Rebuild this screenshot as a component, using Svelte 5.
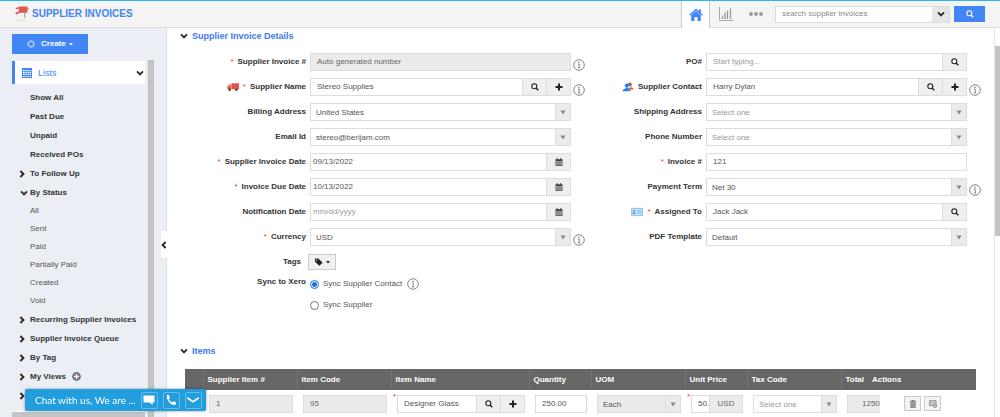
<script>
  const mainLists = ['Show All', 'Past Due', 'Unpaid', 'Received POs'];
  const statuses = ['All', 'Sent', 'Paid', 'Partially Paid', 'Created', 'Void'];
  const groups = ['Recurring Supplier Invoices', 'Supplier Invoice Queue', 'By Tag', 'My Views', ''];

  const leftFields = [
    { id: 'number', label: 'Supplier Invoice #', req: true, kind: 'readonly', value: 'Auto generated number', info: true },
    { id: 'supplier', label: 'Supplier Name', req: true, kind: 'lookup-add', value: 'Stereo Supplies', info: true, icon: 'truck' },
    { id: 'billing', label: 'Billing Address', kind: 'select', value: 'United States' },
    { id: 'email', label: 'Email Id', kind: 'select', value: 'stereo@berijam.com' },
    { id: 'date', label: 'Supplier Invoice Date', req: true, kind: 'date', value: '09/13/2022' },
    { id: 'due', label: 'Invoice Due Date', req: true, kind: 'date', value: '10/13/2022' },
    { id: 'notify', label: 'Notification Date', kind: 'date', value: '', placeholder: 'mm/dd/yyyy' },
    { id: 'currency', label: 'Currency', req: true, kind: 'select', value: 'USD', info: true }
  ];
  const rightFields = [
    { id: 'po', label: 'PO#', kind: 'lookup', value: '', placeholder: 'Start typing...' },
    { id: 'contact', label: 'Supplier Contact', kind: 'lookup-add', value: 'Harry Dylan', info: true, icon: 'people' },
    { id: 'shipping', label: 'Shipping Address', kind: 'select', value: 'Select one', empty: true },
    { id: 'phone', label: 'Phone Number', kind: 'select', value: 'Select one', empty: true },
    { id: 'invoice', label: 'Invoice #', req: true, kind: 'text', value: '121' },
    { id: 'term', label: 'Payment Term', kind: 'select', value: 'Net 30', info: true },
    { id: 'assigned', label: 'Assigned To', req: true, kind: 'lookup', value: 'Jack Jack', icon: 'card' },
    { id: 'template', label: 'PDF Template', kind: 'select', value: 'Default' }
  ];
  let sync = $state('contact');
</script>

{#snippet chevron(dir)}
  <svg class="chev {dir}" viewBox="0 0 8 8" aria-hidden="true"><path d="M1 2.4 4 5.4 7 2.4" fill="none" stroke="#2b2b2b" stroke-width="1.9" /></svg>
{/snippet}

{#snippet magnifier()}
  <svg class="glyph" viewBox="0 0 8 8" aria-hidden="true"><circle cx="3.3" cy="3.3" r="2.5" fill="none" stroke="currentColor" stroke-width="1.1" /><path d="M5 5 7.3 7.3" stroke="currentColor" stroke-width="1.4" /></svg>
{/snippet}

{#snippet plus()}
  <svg class="glyph" viewBox="0 0 8 8" aria-hidden="true"><path d="M4 .5V7.5M.5 4H7.5" stroke="currentColor" stroke-width="2" /></svg>
{/snippet}

{#snippet calendar()}
  <svg class="glyph" viewBox="0 0 8 8" aria-hidden="true"><path d="M.5 1.2H7.5V7.8H.5Z" fill="#444" /><path d="M1.3 3.1H2.6V7H1.3ZM3.4 3.1H4.6V7H3.4ZM5.4 3.1H6.7V7H5.4Z" fill="#c9c9c9" /><path d="M1.2 5.1H6.8" stroke="#666" stroke-width=".5" /><path d="M2.2 0v2M5.8 0v2" stroke="#444" /></svg>
{/snippet}

{#snippet info()}
  <button class="info" type="button" aria-label="Information">
    <svg viewBox="0 0 12 12" aria-hidden="true"><circle cx="6" cy="6" r="5.3" fill="none" stroke="#666" stroke-width=".8" /><path d="M5 5H6.2V8.8M5 8.9H7.2" fill="none" stroke="#666" stroke-width=".8" /><circle cx="6" cy="3.2" r=".7" fill="#666" /></svg>
  </button>
{/snippet}

{#snippet picker(id, value, name, empty = false)}
  <div class="picker" class:empty>
    <select {id} aria-label={name}><option>{value}</option></select>
    <span class="arrow"><svg viewBox="0 0 6 5" aria-hidden="true"><path d="M.5.5H5.5L3 4.5Z" fill="#888" /></svg></span>
  </div>
{/snippet}

{#snippet row(f)}
  <div class="row">
    <label for={f.id}>
      {#if f.icon === 'truck'}
        <svg class="deco" viewBox="0 0 12 9" aria-hidden="true"><path d="M4.6.8H12V6.8H4.6ZM.3 4.3 2 2H4.3V6.8H.3Z" fill="#e2574c" /><path d="M1.3 4 2.4 2.8H3.4V4Z" fill="#f6b0a9" /><circle cx="2.6" cy="7.2" r="1.3" fill="#4b4345" /><circle cx="9.4" cy="7.2" r="1.3" fill="#4b4345" /></svg>
      {:else if f.icon === 'people'}
        <svg class="deco" viewBox="0 0 12 11" aria-hidden="true"><circle cx="8" cy="2.7" r="2.1" fill="#5f6876" /><path d="M6 8.6C6.2 5 11.8 4.6 12 8.3Z" fill="#f0532d" /><path d="M7.2 1.5 9.2 4.8" stroke="#f0532d" stroke-width="1.4" /><circle cx="4.7" cy="3.9" r="2.3" fill="#2687e9" /><path d="M0 10.2C.3 6.7 3.3 8 4 6H5.8C6.3 8 8.8 7.3 8.6 10.2Z" fill="#2687e9" /></svg>
      {:else if f.icon === 'card'}
        <svg class="deco" viewBox="0 0 12 8" aria-hidden="true"><path d="M.4.4H11.6V7.6H.4Z" fill="#bfe2fb" stroke="#70bdf1" stroke-width=".8" /><circle cx="3" cy="3" r="1.1" fill="#a97763" /><path d="M1.4 6C1.5 4 4.5 4 4.6 6Z" fill="#5a8fbb" /><path d="M6 3H10.5M6 5H10.5" stroke="#69b7ec" stroke-width=".8" /></svg>
      {/if}
      {#if f.req}<span class="req">*</span>{/if}
      <span>{f.label}</span>
    </label>
    {#if f.kind === 'select'}
      {@render picker(f.id, f.value, f.label, f.empty)}
    {:else}
      <div class="box" class:readonly={f.kind === 'readonly'} class:date={f.kind === 'date'}>
        <input id={f.id} type="text" value={f.value} placeholder={f.placeholder} readonly={f.kind === 'readonly'} />
        {#if f.kind === 'lookup' || f.kind === 'lookup-add'}
          <button type="button" aria-label="Search">{@render magnifier()}</button>
        {/if}
        {#if f.kind === 'lookup-add'}
          <button type="button" aria-label="Add">{@render plus()}</button>
        {/if}
        {#if f.kind === 'date'}
          <button type="button" aria-label="Choose date">{@render calendar()}</button>
        {/if}
      </div>
    {/if}
    {#if f.info}{@render info()}{/if}
  </div>
{/snippet}

<div class="app">
  <header>
    <svg class="logo" viewBox="0 0 14 16" aria-hidden="true"><path d="M4 1.2Q4 .4 5.2 .4H11.4Q12.4 .4 12.4 1.2V6.8H4Z" fill="#e2574c" /><path d="M.5 2.2 4 .8V2.4L1.8 3.3ZM0 7.2 4 5V7.3L1.5 8.6Z" fill="#e2574c" /><path d="M9.8 6.8V11.6" stroke="#8d8d8d" /><path d="M12.2 3H13.6" stroke="#c54b42" /><path d="M1.5 14.2H11" stroke="#f3d9c0" stroke-width="1.2" /></svg>
    <h1>SUPPLIER INVOICES</h1>
    <nav>
      <a class="home" href="#home" aria-label="Home">
        <svg viewBox="0 0 14 14" aria-hidden="true"><path d="M2.2 7.2 7 3 11.8 7.2V13H8.6V9H5.4V13H2.2Z" fill="#4285f4" /><path d="M.6 7.3 7 1.5 13.4 7.3" fill="none" stroke="#4285f4" stroke-width="1.5" /><path d="M10 1.2H11.8V5H10Z" fill="#4285f4" /></svg>
      </a>
      <a class="chart" href="#reports" aria-label="Reports">
        <svg viewBox="0 0 14 14" aria-hidden="true"><path d="M.5 0V13.5H14" fill="none" stroke="#aaa" /><path d="M3.5 8.5V12M6 5.5V12M8.5 3.5V12M11.5 1.5V12" stroke="#999" stroke-width="1.3" /></svg>
      </a>
      <button class="more" type="button" aria-label="More">
        <svg viewBox="0 0 14 4" aria-hidden="true"><circle cx="2" cy="2" r="1.9" fill="#999" /><circle cx="7" cy="2" r="1.9" fill="#999" /><circle cx="12" cy="2" r="1.9" fill="#999" /></svg>
      </button>
      <div class="search">
        <input type="text" aria-label="Search supplier invoices" placeholder="search supplier invoices" />
        <button type="button" aria-label="Search options">{@render chevron('down')}</button>
      </div>
      <button class="go" type="button" aria-label="Search">{@render magnifier()}</button>
    </nav>
  </header>

  <div class="body">
    <aside>
      <button class="create" type="button">
        <svg class="glyph" viewBox="0 0 8 8" aria-hidden="true"><circle cx="4" cy="4" r="2.8" fill="none" stroke="#a9c7fa" stroke-width="1.4" /><path d="M4 0V2M4 6V8M0 4H2M6 4H8" stroke="#a9c7fa" /></svg>
        <span>Create</span>
        <svg class="caret" viewBox="0 0 4 3" aria-hidden="true"><path d="M0 0H4L2 2.5Z" fill="#fff" /></svg>
      </button>
      <div class="side">
        <div class="lists">
          <button class="lists-head" type="button">
            <svg viewBox="0 0 10 10" aria-hidden="true"><path d="M0 0H10V10H0Z" fill="#4285f4" /><path d="M.9 2.6H9.1M.9 4.6H9.1M.9 6.5H9.1M.9 8.5H9.1" stroke="#fff" stroke-width="1.1" /><path d="M3 2V9.5M5.2 2V9.5M7.3 2V9.5" stroke="#4285f4" stroke-width=".7" /></svg>
            <span>Lists</span>
            {@render chevron('down')}
          </button>
          <ul>
            {#each mainLists as item}<li><a href="#list">{item}</a></li>{/each}
            <li>{@render chevron('right')}<a href="#list">To Follow Up</a></li>
            <li class="open">{@render chevron('down')}<a href="#list">By Status</a></li>
            {#each statuses as item}<li class="sub"><a href="#list">{item}</a></li>{/each}
            {#each groups as item}
              <li>
                {@render chevron('right')}
                {#if item}<a href="#list">{item}</a>{/if}
                {#if item === 'My Views'}
                  <button class="add" type="button" aria-label="Add view"><svg viewBox="0 0 9 9" aria-hidden="true"><circle cx="4.5" cy="4.5" r="4.4" fill="#777" /><path d="M4.5 2V7M2 4.5H7" stroke="#fff" stroke-width="1.3" /></svg></button>
                {/if}
              </li>
            {/each}
          </ul>
          <div class="panel"></div>
        </div>
        <div class="side-scroll"></div>
      </div>
      <button class="collapse" type="button" aria-label="Collapse sidebar">{@render chevron('left')}</button>
    </aside>

    <main>
      <h2>{@render chevron('down')}<span>Supplier Invoice Details</span></h2>
      <form>
        <div class="col">
          {#each leftFields as f}{@render row(f)}{/each}
          <div class="row tags">
            <span class="label">Tags</span>
            <button class="tag" type="button" aria-label="Add tag">
              <svg class="glyph" viewBox="0 0 8 8" aria-hidden="true"><path d="M0 .6H3.4L7.6 4.7 4.4 7.8 0 3.7Z" fill="#222" /><circle cx="1.5" cy="2" r=".7" fill="#eee" /></svg>
              <svg class="caret" viewBox="0 0 4 3" aria-hidden="true"><path d="M0 0H4L2 2.5Z" fill="#222" /></svg>
            </button>
          </div>
          <div class="row sync">
            <span class="label">Sync to Xero</span>
            <div class="choices">
              <div class="choice">
                <label><input type="radio" value="contact" bind:group={sync} /><span>Sync Supplier Contact</span></label>
                {@render info()}
              </div>
              <div class="choice">
                <label><input type="radio" value="supplier" bind:group={sync} /><span>Sync Supplier</span></label>
              </div>
            </div>
          </div>
        </div>
        <div class="col">
          {#each rightFields as f}{@render row(f)}{/each}
        </div>
      </form>

      <h2>{@render chevron('down')}<span>Items</span></h2>
      <table>
        <colgroup>
          <col class="w-mark" /><col class="w-std" /><col class="w-std" /><col class="w-name" /><col class="w-small" />
          <col class="w-std" /><col class="w-small" /><col class="w-std" /><col class="w-total" /><col class="w-actions" />
        </colgroup>
        <thead>
          <tr>
            <th></th><th>Supplier Item #</th><th>Item Code</th><th>Item Name</th><th>Quantity</th>
            <th>UOM</th><th>Unit Price</th><th>Tax Code</th><th>Total</th><th class="last">Actions</th>
          </tr>
        </thead>
        <tbody>
          <tr>
            <td></td>
            <td><div class="box readonly"><input aria-label="Supplier Item #" value="1" readonly /></div></td>
            <td><div class="box readonly"><input aria-label="Item Code" value="95" readonly /></div></td>
            <td class="needed">
              <div class="box">
                <input aria-label="Item Name" value="Designer Glass" />
                <button type="button" aria-label="Search item">{@render magnifier()}</button>
                <button type="button" aria-label="Add item">{@render plus()}</button>
              </div>
            </td>
            <td><div class="box"><input aria-label="Quantity" value="250.00" /></div></td>
            <td class="grey">{@render picker('uom', 'Each', 'UOM')}</td>
            <td class="needed price"><div class="box"><input aria-label="Unit Price" value="50.00" /><span class="unit">USD</span></div></td>
            <td>{@render picker('tax', 'Select one', 'Tax Code', true)}</td>
            <td class="total"><div class="box readonly"><input aria-label="Total" value="12500.00" readonly /></div></td>
            <td class="actions">
              <div>
                <button type="button" aria-label="Delete row"><svg class="glyph" viewBox="0 0 8 8" aria-hidden="true"><path d="M.8 1.3H7.2M2.8.5H5.2" stroke="#777" /><path d="M1.3 2.2H6.7V8H1.3Z" fill="#888" /><path d="M3 3V7M5 3V7" stroke="#bbb" stroke-width=".6" /></svg></button>
                <button type="button" aria-label="Insert row"><svg class="glyph" viewBox="0 0 8 8" aria-hidden="true"><path d="M.4.6H7V5.6H.4Z" fill="none" stroke="#888" stroke-width=".9" /><path d="M.5 2.3H7M.5 4H7" stroke="#888" stroke-width=".8" /><circle cx="6" cy="6" r="2" fill="#888" /><path d="M6 4.9V7.1M4.9 6H7.1" stroke="#eee" stroke-width=".7" /></svg></button>
              </div>
            </td>
          </tr>
        </tbody>
      </table>
    </main>
    <div class="page-scroll"><div></div></div>
  </div>

  <section class="chat" aria-label="Chat">
    <span>Chat with us, We are ...</span>
    <button type="button" aria-label="Message"><svg viewBox="0 0 12 12" aria-hidden="true"><path d="M.5 1.5H11.5V8.5H9.6V11L6.6 8.5H.5Z" fill="#fff" /></svg></button>
    <button type="button" aria-label="Call"><svg viewBox="0 0 12 12" aria-hidden="true"><path d="M2.2.8 4 .9 5 3.8 3.8 5C4.4 6.6 5.4 7.7 7 8.4L8.3 7.2 11.1 8.4 11 10.2C7 13 .2 5.5 2.2.8Z" fill="#fff" /></svg></button>
    <button type="button" aria-label="Minimize"><svg viewBox="0 0 12 12" aria-hidden="true"><path d="M.3 3.8 6 7.8 11.7 3.8" fill="none" stroke="#fff" stroke-width="1.7" /></svg></button>
  </section>
</div>

<style>
  :global(body) { overflow: hidden; }
  .app { height: 100vh; display: flex; flex-direction: column; overflow: hidden; background: #fff; color: #333; font: 8px/12px "Liberation Sans", Arial, sans-serif; }
  .app * { box-sizing: border-box; }
  svg { display: block; flex: none; }
  button, input, select { font: inherit; color: inherit; margin: 0; padding: 0; border: 0; background: none; border-radius: 0; min-width: 0; outline: none; }
  button { cursor: pointer; display: flex; align-items: center; justify-content: center; flex: none; }
  a { color: inherit; text-decoration: none; }
  ::placeholder { color: #999; opacity: 1; }
  .glyph { width: 8px; height: 8px; }
  .caret { width: 4px; height: 3px; }
  .chev { width: 8px; height: 8px; }
  .right { transform: rotate(-90deg); }
  .left { transform: rotate(90deg); }

  header { flex: none; height: 28px; display: flex; align-items: center; border-top: 1px solid #2cb5f2; border-bottom: 1px solid #ddd; background: #f4f4f4; padding: 0 15px; }
  .logo { width: 14px; height: 16px; margin-right: 3px; }
  h1 { margin: 0; flex: 1; font-size: 10px; color: #4285f4; white-space: nowrap; }
  nav { display: flex; align-items: center; align-self: stretch; }
  .home { width: 29px; align-self: stretch; margin-bottom: -1px; background: #fff; border: solid #ccc; border-width: 0 1px; display: flex; align-items: center; justify-content: center; }
  .home svg, .chart svg { width: 14px; height: 14px; }
  .chart { margin-left: 9px; }
  .more { margin: 0 12px 0 16px; }
  .more svg { width: 14px; height: 4px; }
  .search { display: flex; width: 175px; height: 17px; border: 1px solid #ddd; background: #fff; }
  .search input { flex: 1; padding: 0 6px; color: #666; }
  .search ::placeholder { color: #888; }
  .search button { width: 17px; background: #e6e6e6; }
  .go { margin-left: 4px; width: 31px; height: 16px; background: #4285f4; color: #fff; }

  .body { flex: 1; min-height: 0; display: flex; }
  aside { position: relative; flex: none; width: 167px; border-right: 1px solid #dcdfe4; background: #ebeff5; padding: 6px 12px 0; display: flex; flex-direction: column; align-items: flex-start; }
  .create { width: 76px; height: 20px; gap: 6px; background: #4285f4; color: #fff; font-weight: bold; }
  .create .caret { margin-left: -3px; }
  .side { flex: 1; min-height: 0; width: 142px; margin-top: 6px; display: flex; gap: 3px; }
  .lists { flex: 1; padding-top: 1px; overflow: hidden; }
  .side-scroll { width: 6px; background: #c6c6c6; border: 1px solid #bbb; border-bottom: 0; }
  .lists-head { width: 100%; height: 23px; background: #fff; border-left: 3px solid #4285f4; padding: 0 1px 0 7px; color: #4285f4; font-size: 9px; }
  .lists-head svg:first-child { width: 10px; height: 10px; }
  .lists-head span { flex: 1; text-align: left; padding-left: 6px; }
  ul { list-style: none; margin: 4px 0 0; padding: 0; }
  li { display: flex; align-items: center; height: 19px; padding-left: 18px; font-weight: bold; white-space: nowrap; }
  li:has(> .chev) { padding-left: 6px; }
  li > .chev { margin-right: 4px; }
  li.open { padding-left: 8px; }
  .open > .chev { margin-right: 2px; }
  .sub { height: 18px; font-weight: normal; color: #555; }
  .add { margin-left: 6px; }
  .add svg { width: 9px; height: 9px; }
  .panel { margin-top: 6px; height: 20px; background: #c4c4c4; border-top: 1px solid #fff; }
  .collapse { position: absolute; right: -1px; top: 203px; width: 6px; height: 27px; background: #fff; }

  main { flex: 1; min-width: 0; padding: 0 12px 0 13px; }
  h2 { margin: 0; height: 16px; display: flex; align-items: center; gap: 4px; font-size: 9px; color: #4078e8; }
  form { margin: 9px 0 32px 10px; display: grid; grid-template-columns: 1fr 1fr; }
  .col { display: flex; flex-direction: column; gap: 7px; }
  .row { display: grid; grid-template-columns: 116px 1fr 13px; align-items: center; column-gap: 2px; }
  .row > label, .label { display: flex; align-items: center; justify-content: flex-end; gap: 4px; font-weight: bold; white-space: nowrap; }
  .row > .box, .row > .picker, .choices { margin-left: 2px; }
  .req { color: #e33; font-weight: normal; }
  .deco { width: 12px; height: 10px; }
  .box { display: flex; height: 18px; border: 1px solid #ddd; background: #fff; min-width: 0; color: #555; }
  .box input { flex: 1; width: 0; padding: 0 6px; }
  .date input { padding: 0 2px; }
  .box button { width: 24px; background: #efefef; border-left: 1px solid #ddd; color: #222; }
  .readonly { background: #ebebeb; color: #666; }
  .picker { display: grid; grid-template-columns: 1fr 15px; height: 18px; border: 1px solid #ddd; background: #fff; color: #555; min-width: 0; }
  .picker select { grid-area: 1 / 1 / 2 / 3; appearance: none; padding: 1px 20px 0 5px; }
  .arrow { grid-area: 1 / 2; display: flex; align-items: center; justify-content: center; background: #ebebeb; border-left: 1px solid #ddd; pointer-events: none; }
  .arrow svg { width: 6px; height: 5px; }
  .empty { color: #999; }
  .info { align-self: end; width: 12px; height: 12px; }
  .info svg { width: 12px; height: 12px; }
  .tags { margin-top: 1px; }
  .tags .label { padding-right: 5px; }
  .tag { width: 28px; height: 16px; gap: 3px; border: 1px solid #ccc; background: #f0f0f0; }
  .sync { align-items: start; margin-top: -1px; }
  .choices { display: flex; flex-direction: column; gap: 9px; padding-top: 2px; }
  .choice { display: flex; gap: 5px; height: 12px; }
  .choice label { display: flex; align-items: center; gap: 4px; color: #555; white-space: nowrap; }
  .choice input { appearance: none; width: 9px; height: 9px; border: 1px solid #777; border-radius: 50%; }
  .choice input:checked { border-color: #1a73e8; background: radial-gradient(#1a73e8 0 2px, #fff 3px); }

  table { margin: 10px 6px 0 5px; width: calc(100% - 11px); table-layout: fixed; border-collapse: collapse; }
  .w-mark { width: 18px; }
  .w-small { width: 62px; }
  .w-std { width: 94px; }
  .w-name { width: 138px; }
  .w-total { width: 31px; }
  th { height: 21px; padding: 0 4px; background: #666; border-left: 1px solid #737373; color: #fff; text-align: left; white-space: nowrap; }
  .last { border-left: 0; padding: 0; }
  th:first-child { border-left: 0; }
  td { padding: 5px 4px 0 6px; vertical-align: top; }
  .needed { position: relative; }
  .needed::before { content: "*"; position: absolute; left: 2px; top: 1px; color: #e33; }
  .unit { flex: none; width: 33px; border-left: 1px solid #ddd; text-align: center; line-height: 16px; color: #666; }
  .unit, .grey .picker { background: #ebebeb; }
  .price input { padding-right: 0; }
  .total { padding-right: 0; }
  .total .box { width: 33px; border-right: 0; }
  .total input { padding: 0 0 0 14px; }
  .actions > div { display: flex; gap: 3px; padding: 1px 0 0 26px; }
  .actions button { width: 17px; height: 15px; border: 1px solid #ccc; background: #f3f3f3; }

  .page-scroll { flex: none; width: 6px; border-left: 1px solid #e6e6e6; padding-top: 18px; }
  .page-scroll div { height: 190px; background: #c4c4c4; }

  .chat { position: fixed; left: 25px; bottom: 6px; height: 22px; display: flex; align-items: center; gap: 5px; padding: 0 4px 0 10px; border-radius: 2px; background: #229ddd; box-shadow: 0 0 3px #0006; color: #fff; font: 10px/20px Lato, sans-serif; }
  .chat span { white-space: nowrap; }
  .chat button { width: 17px; height: 17px; border: 1px solid #62bbe9; border-radius: 2px; }
  .chat svg { width: 12px; height: 12px; }
</style>
